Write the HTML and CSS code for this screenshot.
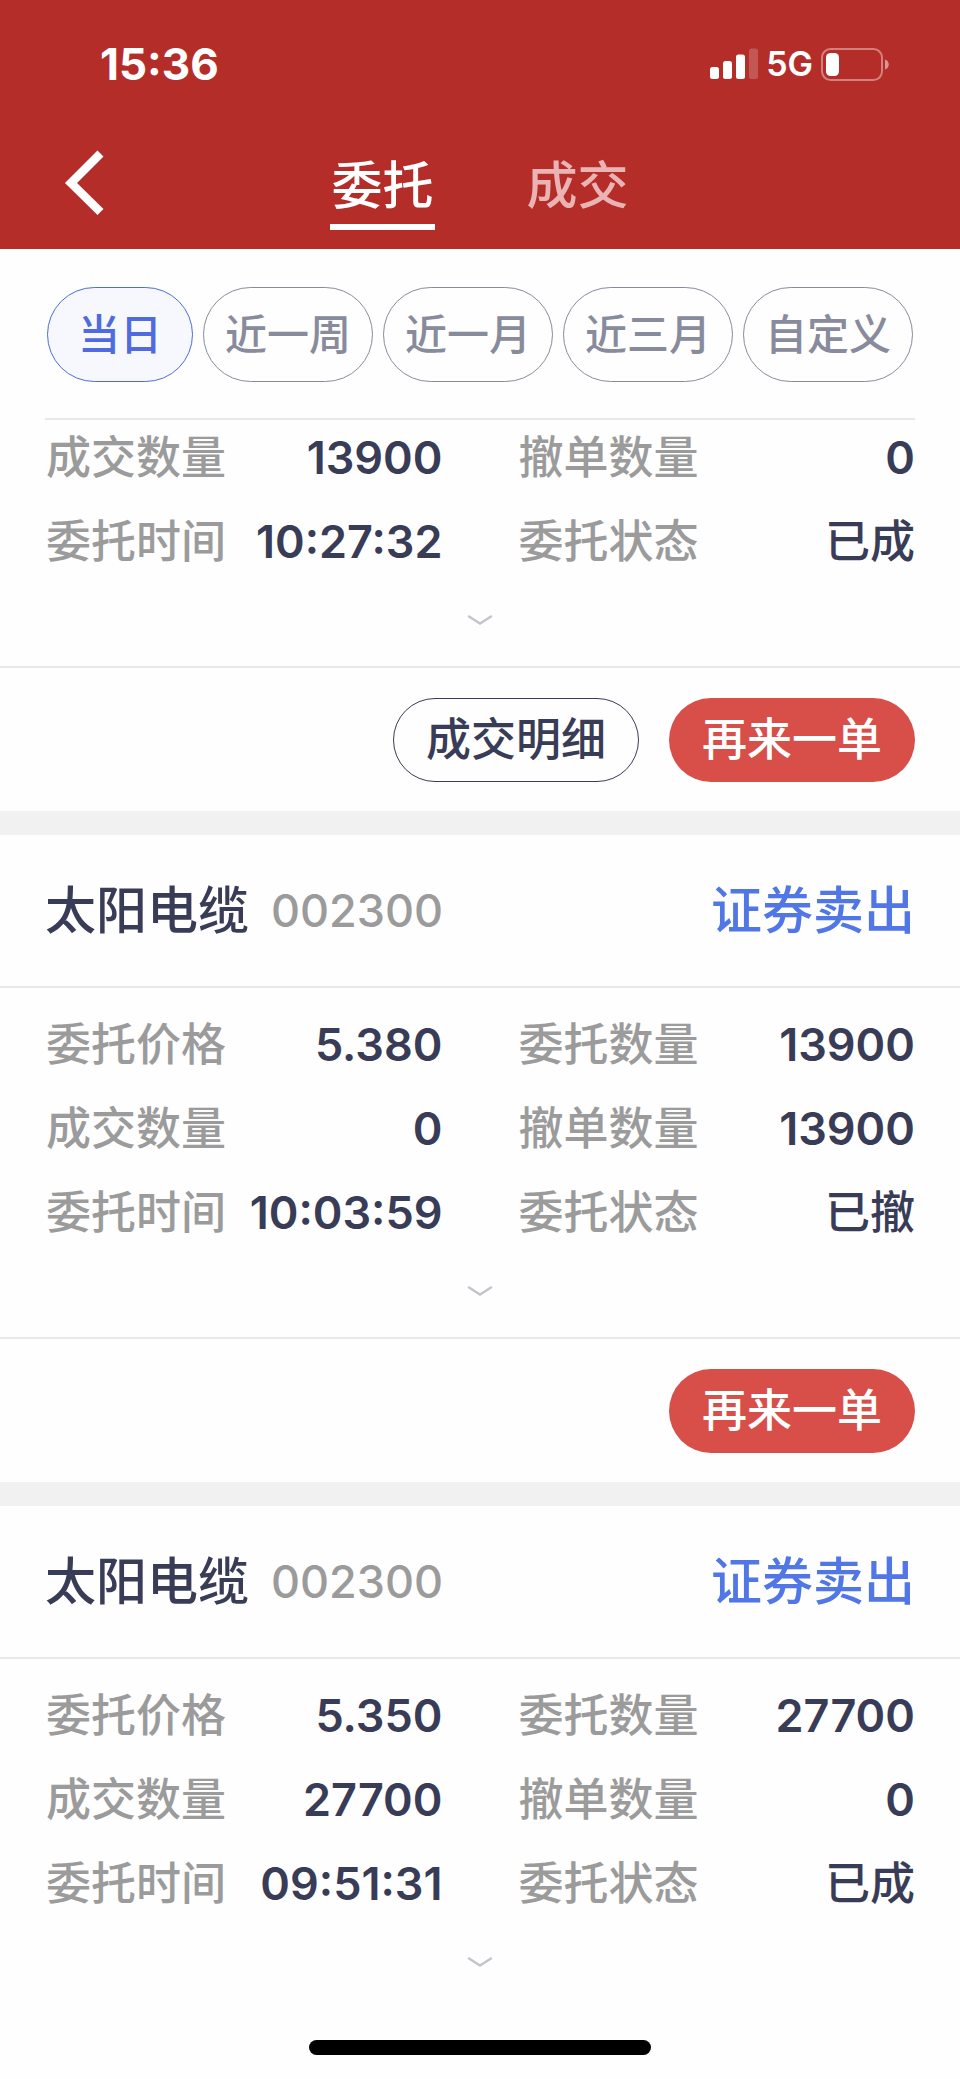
FILE: index.html
```html
<!DOCTYPE html>
<html lang="zh-CN">
<head>
    <meta charset="UTF-8">
    <meta name="viewport" content="width=device-width, initial-scale=1.0">
    <title>委托</title>
    <link rel="stylesheet" href="styles.css">
</head>
<body>
    <header class="header">
        <div class="status-bar">
            <span class="clock">15:36</span>
            <div class="status-icons">
                <svg class="signal" width="48" height="32" viewBox="0 0 48 32" fill="#fff">
                    <rect x="0" y="19" width="9" height="12" rx="2.5"/>
                    <rect x="13" y="13" width="9" height="18" rx="2.5"/>
                    <rect x="26" y="6.5" width="9" height="24.5" rx="2.5"/>
                    <rect x="39" y="0.5" width="9" height="30.5" rx="2.5" opacity="0.2"/>
                </svg>
                <span class="network">5G</span>
                <svg class="battery" width="68" height="33" viewBox="0 0 68 33">
                    <rect x="1" y="1" width="60" height="31" rx="8.5" fill="none" stroke="#fff" stroke-opacity="0.4" stroke-width="2"/>
                    <rect x="5" y="5" width="13" height="23" rx="4.5" fill="#fff"/>
                    <path d="M64 11.5C69 13 69 20 64 21.500Z" fill="#fff" fill-opacity="0.5"/>
                </svg>
            </div>
        </div>
        <div class="nav">
            <button class="back" type="button" aria-label="返回">
                <svg width="40" height="66" viewBox="0 0 40 66" fill="none" stroke="#fff" stroke-width="8.5">
                    <path d="M36.500 3.500L7 33L36.500 62"/>
                </svg>
            </button>
            <nav class="tabs">
                <a class="tab active" href="#orders">委托</a>
                <a class="tab" href="#deals">成交</a>
            </nav>
        </div>
    </header>

    <div class="filters">
        <button class="chip active" type="button">当日</button>
        <button class="chip" type="button">近一周</button>
        <button class="chip" type="button">近一月</button>
        <button class="chip" type="button">近三月</button>
        <button class="chip" type="button">自定义</button>
    </div>

    <main class="order-list" id="orders">
        <section class="order scrolled">
            <dl class="fields">
                <div class="field"><dt>成交数量</dt><dd>13900</dd></div>
                <div class="field"><dt>撤单数量</dt><dd>0</dd></div>
                <div class="field"><dt>委托时间</dt><dd>10:27:32</dd></div>
                <div class="field"><dt>委托状态</dt><dd class="state">已成</dd></div>
            </dl>
            <button class="expand" type="button" aria-label="展开">
                <svg width="26" height="12" viewBox="0 0 26 12" fill="none" stroke="#c4c4cc" stroke-width="2.5" stroke-linecap="round">
                    <path d="M2 2.500L13 9.500L24 2.500"/>
                </svg>
            </button>
            <div class="actions">
                <button class="btn btn-outline" type="button">成交明细</button>
                <button class="btn btn-primary" type="button">再来一单</button>
            </div>
        </section>

        <section class="order">
            <div class="order-head">
                <h2>太阳电缆</h2>
                <span class="code">002300</span>
                <span class="side">证券卖出</span>
            </div>
            <dl class="fields">
                <div class="field"><dt>委托价格</dt><dd>5.380</dd></div>
                <div class="field"><dt>委托数量</dt><dd>13900</dd></div>
                <div class="field"><dt>成交数量</dt><dd>0</dd></div>
                <div class="field"><dt>撤单数量</dt><dd>13900</dd></div>
                <div class="field"><dt>委托时间</dt><dd>10:03:59</dd></div>
                <div class="field"><dt>委托状态</dt><dd class="state">已撤</dd></div>
            </dl>
            <button class="expand" type="button" aria-label="展开">
                <svg width="26" height="12" viewBox="0 0 26 12" fill="none" stroke="#c4c4cc" stroke-width="2.5" stroke-linecap="round">
                    <path d="M2 2.500L13 9.500L24 2.500"/>
                </svg>
            </button>
            <div class="actions">
                <button class="btn btn-primary" type="button">再来一单</button>
            </div>
        </section>

        <section class="order">
            <div class="order-head">
                <h2>太阳电缆</h2>
                <span class="code">002300</span>
                <span class="side">证券卖出</span>
            </div>
            <dl class="fields">
                <div class="field"><dt>委托价格</dt><dd>5.350</dd></div>
                <div class="field"><dt>委托数量</dt><dd>27700</dd></div>
                <div class="field"><dt>成交数量</dt><dd>27700</dd></div>
                <div class="field"><dt>撤单数量</dt><dd>0</dd></div>
                <div class="field"><dt>委托时间</dt><dd>09:51:31</dd></div>
                <div class="field"><dt>委托状态</dt><dd class="state">已成</dd></div>
            </dl>
            <button class="expand" type="button" aria-label="展开">
                <svg width="26" height="12" viewBox="0 0 26 12" fill="none" stroke="#c4c4cc" stroke-width="2.5" stroke-linecap="round">
                    <path d="M2 2.500L13 9.500L24 2.500"/>
                </svg>
            </button>
        </section>
    </main>

    <div class="home-indicator"></div>
</body>
</html>
```
FILE: styles.css
```css
* {
    box-sizing: border-box;
}

body {
    margin: 0;
    background-color: #fefefe;
    color: #393c56;
    font-family: Inter, "Noto Sans CJK SC", sans-serif;
    font-size: 45px;
    font-weight: 500;
    line-height: 60px;
}

button {
    margin: 0;
    padding: 0;
    border: none;
    background: none;
    font: inherit;
    color: inherit;
    cursor: pointer;
}

svg {
    display: block;
}

/* header */
.header {
    background-color: #b52d29;
    color: #fff;
    padding-top: 34px;
}

.status-bar {
    display: flex;
    justify-content: space-between;
    align-items: center;
    padding: 0 71px 0 100px;
}

.clock {
    font-size: 44px;
    font-weight: 700;
}

.status-icons {
    display: flex;
    align-items: center;
    gap: 8px;
}

.network {
    font-size: 34px;
    font-weight: 600;
}

.nav {
    display: grid;
    grid-template-columns: 1fr auto 1fr;
    align-items: start;
    padding: 56px 45px 19px;
}

.back {
    justify-self: start;
    padding-left: 19px;
}

.tabs {
    display: flex;
    gap: 91px;
}

.tab {
    padding: 0 1px 3px;
    border-bottom: 6px solid transparent;
    color: #ebb4b4;
    font-size: 51px;
    line-height: 71px;
    text-decoration: none;
}

.tab.active {
    border-bottom-color: #fff;
    color: #fff;
}

/* date range */
.filters {
    display: flex;
    gap: 10px;
    margin: 0 45px;
    padding: 38px 2px 36px;
    border-bottom: 2px solid #e8e8e8;
}

.chip {
    flex: 7 1 0;
    height: 95px;
    border: 1px solid #888b9c;
    border-radius: 48px;
    color: #888b9c;
    font-size: 42px;
    white-space: nowrap;
}

.chip.active {
    flex-grow: 6;
    border-color: #4f6bdd;
    background-color: #f6f8fd;
    color: #4f6bdd;
}

/* orders */
.order + .order {
    border-top: 24px solid #f1f1f1;
}

.order-head {
    display: flex;
    align-items: center;
    gap: 22px;
    padding: 46px 45px 45px;
    border-bottom: 2px solid #e8e8e8;
}

.order-head h2 {
    margin: 0;
    font-size: 51px;
    font-weight: 500;
}

.code {
    color: #9b9b9b;
}

.side {
    margin-left: auto;
    color: #5176e6;
    font-size: 51px;
}

.fields {
    display: grid;
    grid-template-columns: 1fr 1fr;
    gap: 24px 76px;
    margin: 0;
    padding: 27px 45px 0 46px;
}

.scrolled .fields {
    padding-top: 8px;
}

.field {
    display: flex;
    justify-content: space-between;
    white-space: nowrap;
}

.field dt {
    color: #9b9b9b;
}

.field dd {
    margin: 0;
    font-weight: 600;
}

.field .state {
    font-weight: 500;
}

.expand {
    display: flex;
    justify-content: center;
    align-items: center;
    width: 100%;
    height: 94px;
    padding-top: 2px;
}

.actions {
    display: flex;
    justify-content: flex-end;
    gap: 30px;
    padding: 30px 45px 29px;
    border-top: 2px solid #e8e8e8;
}

.btn {
    width: 246px;
    height: 84px;
    border-radius: 42px;
}

.btn-outline {
    border: 1px solid #393c56;
}

.btn-primary {
    background-color: #d84e48;
    color: #fff;
}

.home-indicator {
    width: 342px;
    height: 15px;
    margin: 32px auto 24px;
    border-radius: 8px;
    background-color: #000;
}
```
